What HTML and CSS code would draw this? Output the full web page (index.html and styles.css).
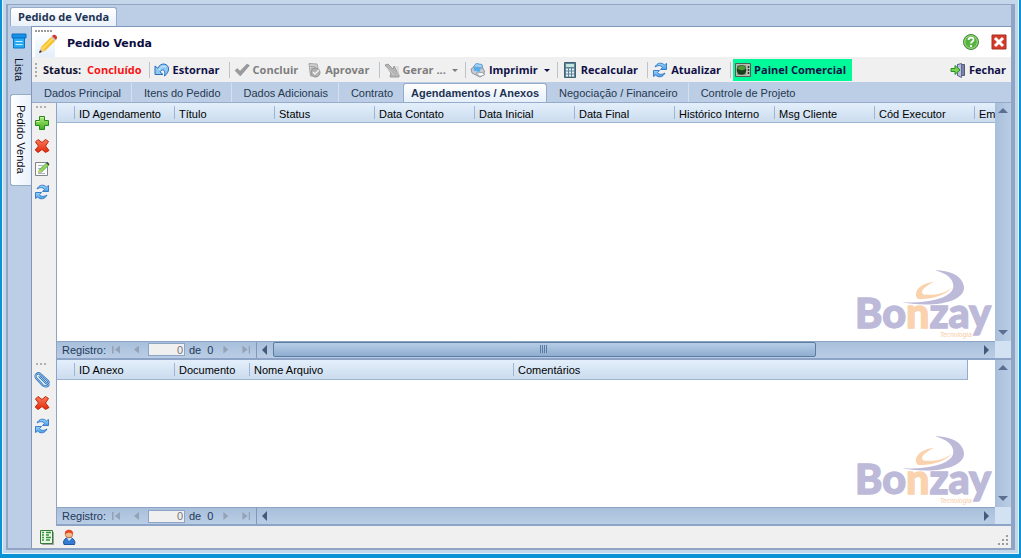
FILE: index.html
```html
<!DOCTYPE html>
<html lang="pt-BR">
<head>
<meta charset="utf-8">
<title>Pedido de Venda</title>
<link rel="stylesheet" href="styles.css">
</head>
<body>
<svg class="defs" aria-hidden="true">
  <defs>
    <linearGradient id="gGreen" x1="0" y1="0" x2="0" y2="1"><stop offset="0" stop-color="#b4ec7c"/><stop offset="1" stop-color="#3fae1c"/></linearGradient>
    <linearGradient id="gRed" x1="0" y1="0" x2="0" y2="1"><stop offset="0" stop-color="#fb7a5c"/><stop offset="1" stop-color="#e02a08"/></linearGradient>
    <linearGradient id="gBlue" x1="0" y1="0" x2="0" y2="1"><stop offset="0" stop-color="#9ad8fb"/><stop offset="1" stop-color="#4a9be6"/></linearGradient>
    <symbol id="plus" viewBox="0 0 16 16"><path d="M5.500 1.500h5v4h4v5h-4v4h-5v-4h-4v-5h4z" fill="url(#gGreen)" stroke="#258a1c"/><path d="M6.500 2.500h3M2.500 6.500h3" stroke="#d9f8bd"/></symbol>
    <symbol id="delete" viewBox="0 0 16 16"><path d="M4 1.500 8 4.500l3.500-3 3 2-3 4.500 3.500 4.500-3.500 2L8 11.500l-4 3-2.800-2.500L4.500 8 1.500 4z" fill="url(#gRed)" stroke="#c2260c" stroke-linejoin="round"/></symbol>
    <symbol id="edit" viewBox="0 0 16 16"><path d="M1.500 1.500h12v13h-12z" fill="#fafafa" stroke="#81868d"/><path d="M4 4.500h5M4 7.500h4M4 12.500h7" stroke="#aab4c2"/><path d="m4.500 11.500 1-3 7-6.500 2.500 2-7.500 7z" fill="#8cd65c" stroke="#4aa040" stroke-width=".7"/><path d="m4 12 1.500-3 2 2z" fill="#e7c27c"/><path d="m12 2 1.500-1 2 2-1 1.500z" fill="#43484e"/></symbol>
    <symbol id="refresh" viewBox="0 0 16 16"><g fill="url(#gBlue)" stroke="#2f74c4" stroke-width=".9" stroke-linejoin="round"><path d="M3 5C5 .5 10 .2 12.300 3L14.500 1.500V7.500H8.500L10.500 5.300C9 3.300 6 3 3 5z"/><path d="M13 11c-2 4.500-7 4.800-9.300 2L1.500 14.500v-6h6l-2 2.200c1.500 2 4.500 2.300 7.500.3z"/></g></symbol>
    <symbol id="undo" viewBox="0 0 16 16"><path d="M1 4v8.500h8L6 9.800C8.500 6.500 12 7.500 10.500 14c5-3.500 6-11-.5-12C7.500 1.800 5 3.500 3.800 6.200z" fill="#90c8f4" stroke="#2a6fbd" stroke-linejoin="round"/><path d="M5 8c1.500-3 4.500-4.500 7-3" fill="none" stroke="#d9f0ff"/></symbol>
    <symbol id="check" viewBox="0 0 16 16"><path d="m1 8.500 2.500-2L6 9.300 13 2l2.500 1.500L6.300 14z" fill="#9a9a9a" stroke="#8a8a8a" stroke-width=".5"/></symbol>
    <symbol id="approve" viewBox="0 0 16 16"><path d="m3 1.500 8 .5 1 4-2 8H4.500z" fill="#d0d0d0" stroke="#a5a5a5"/><path d="m4.500 4.500 5 .5m-4.500 2h4" stroke="#999"/><circle cx="9.500" cy="10.500" r="4.500" fill="#b0b0b0" stroke="#929292"/><path d="m7 10 2 2 4-4" fill="none" stroke="#f1f1f1" stroke-width="1.500"/></symbol>
    <symbol id="generate" viewBox="0 0 16 16"><path d="m1 3 3-1 5 5 1-3 5 9v2H6l1-4z" fill="#b5b5b5" stroke="#9b9b9b"/><path d="m2 5 8 8M11 5h3v8" stroke="#ccc" fill="none"/></symbol>
    <symbol id="printer" viewBox="0 0 16 16"><path d="m3 5.500 3-4 6 1 1 5z" fill="#9ad1fa" stroke="#639fd3"/><path d="m1 7 3-2 8.500 1 2 3-1 4L10 15l-8-4z" fill="#c9cdd3" stroke="#8e949f"/><path d="m4 5 7 1-1.500 4-6-1.500z" fill="#55aef0"/><path d="m6 11 6-.5 3 2-5 2z" fill="#fff" stroke="#7d8794" stroke-width=".7"/></symbol>
    <symbol id="calc" viewBox="0 0 16 16"><path d="M2.500.5h11v15h-11z" fill="#5c8399" stroke="#41616f"/><path d="M4 2h8v3H4z" fill="#c4e6dc"/><path d="M4 7.500h8M4 10.500h8M4 13.500h8" stroke="#e8f2f5" stroke-width="2" stroke-dasharray="2 1"/></symbol>
    <symbol id="panel" viewBox="0 0 16 16"><path d="M.5 1.500h15v13H.5z" fill="#b9beb2" stroke="#555c55"/><path d="M2 3h9v10H2z" fill="#8a9486"/><circle cx="6.500" cy="8" r="4.800" fill="#173f1b"/><path d="M2.500 7c1-4 7-5 8.300 0L7 8.500z" fill="#4e9a3a"/><path d="M13.500 4v2m0 1v2m0 1v2" stroke="#333" stroke-width="1.500"/></symbol>
    <symbol id="exit" viewBox="0 0 16 16"><path d="M7.500 2.500h7v11h-7z" fill="#7b82aa" stroke="#51587d"/><path d="m7.500 2.500 4-1v14l-4-2z" fill="#b8bedb" stroke="#626990"/><path d="M1 6.500h4v-3L10 8l-5 4.500v-3H1z" fill="#7cd34f" stroke="#2b8d2b"/></symbol>
    <symbol id="clip" viewBox="0 0 16 16"><path d="m5 4 7 7c1.500 1.500 3.500-.5 2-2L7 2.500C4-.5-.5 3 2.500 6.500l6 6.500c2 2 6 2 6-1" fill="none" stroke="#3476b9" stroke-width="2.200"/><path d="m5 4 7 7c1.500 1.500 3.500-.5 2-2L7 2.500C4-.5-.5 3 2.500 6.500l6 6.500c2 2 6 2 6-1" fill="none" stroke="#a2d2f7" stroke-width=".8"/></symbol>
    <symbol id="logo" viewBox="54 30 414 216">
      <path d="M288 34c62 0 87 29 87 52 0 42-90 62-185 44 74 3 153-12 153-49 0-22-21-38-55-47z" fill="#bdb9d9"/>
      <path d="M286 68c-50 5-65 36-49 52 43 0 78-9 103-34-25 17-51 23-79 21-19-1-18-18 25-39z" fill="#fad3ae"/>
      <text x="48" y="206" class="brand">Bo<tspan class="brand-accent">n</tspan>zay</text>
      <text x="302" y="235" class="brand-sub">Tecnologia</text>
    </symbol>
  </defs>
</svg>

<div class="window">
  <div class="frame">
    <nav class="doc-tabs"><button class="doc-tab">Pedido de Venda</button></nav>
    <div class="workspace">
      <nav class="side-tabs">
        <button class="side-tab">
          <svg class="icon" viewBox="0 0 16 16"><path d="M1 1h14v4H1z" fill="#1791e8" stroke="#0872c2"/><path d="M2.500 5h11v10h-11z" fill="#29a9f4" stroke="#0876c8"/><path d="M4.500 8.500h7m-7 3h7" stroke="#caf0ff"/></svg>
          <span>Lista</span>
        </button>
        <button class="side-tab side-tab-active"><span>Pedido Venda</span></button>
      </nav>
      <main class="content">
        <header class="title-bar">
          <div class="title-icon"><span class="grip-row"></span>
            <svg viewBox="0 0 20 20"><path d="m1 19 2-6 4 4z" fill="#eac98d"/><path d="m1 19 1-3 2 2z" fill="#333"/><path d="M3 13 13 3l4 4L7 17z" fill="#f9bd25"/><path d="M4 14 14 4l1.500 1.500L5.500 15.500z" fill="#ffdc5d"/><path d="m13 3 1-1 4 4-1 1z" fill="#bdc2c9"/><path d="M14 2Q16 0 18 1.500T18 6z" fill="#d13b2d"/></svg>
          </div>
          <h1>Pedido Venda</h1>
          <button class="title-button" aria-label="Ajuda"><svg viewBox="0 0 16 16"><circle cx="8" cy="8" r="7.500" fill="#55b33e" stroke="#48853e"/><circle cx="8" cy="8" r="6.300" fill="none" stroke="#a8dc93"/><path d="M5.500 6c.3-3.500 5.500-3 5 0-.3 1.500-2.500 1.500-2.500 3.500M8 11v2" fill="none" stroke="#fff" stroke-width="1.800"/></svg></button>
          <button class="title-button" aria-label="Fechar aba"><svg viewBox="0 0 16 16"><path d="M1 1h14v14H1z" fill="#d33c2c" stroke="#ad2c20"/><path d="m4 4 8 8m0-8-8 8" stroke="#fff" stroke-width="3"/></svg></button>
        </header>

        <div class="toolbar" role="toolbar">
          <span class="grip-col"></span>
          <span class="status-label">Status:</span><span class="status-value">Concluído</span>
          <i class="sep"></i>
          <button class="tool"><svg class="icon"><use href="#undo"/></svg>Estornar</button>
          <i class="sep sep-wide"></i>
          <button class="tool" disabled><svg class="icon"><use href="#check"/></svg>Concluir</button>
          <button class="tool tool-next" disabled><svg class="icon"><use href="#approve"/></svg>Aprovar</button>
          <i class="sep sep-wide"></i>
          <button class="tool" disabled><svg class="icon"><use href="#generate"/></svg>Gerar ...<span class="caret"></span></button>
          <i class="sep"></i>
          <button class="tool"><svg class="icon"><use href="#printer"/></svg>Imprimir<span class="caret"></span></button>
          <i class="sep"></i>
          <button class="tool"><svg class="icon"><use href="#calc"/></svg>Recalcular</button>
          <i class="sep sep-wide"></i>
          <button class="tool"><svg class="icon"><use href="#refresh"/></svg>Atualizar</button>
          <i class="sep sep-wide"></i>
          <button class="tool tool-green"><svg class="icon"><use href="#panel"/></svg>Painel Comercial</button>
          <button class="tool tool-end"><svg class="icon"><use href="#exit"/></svg>Fechar</button>
        </div>

        <nav class="tabs">
          <button class="tab">Dados Principal</button><button class="tab">Itens do Pedido</button><button class="tab">Dados Adicionais</button><button class="tab tab-last">Contrato</button><button class="tab tab-active">Agendamentos / Anexos</button><button class="tab">Negociação / Financeiro</button><button class="tab tab-last">Controle de Projeto</button>
        </nav>

        <section class="pane pane-top">
          <div class="pane-tools">
            <span class="grip-row grip-short"></span>
            <button aria-label="Adicionar"><svg class="icon"><use href="#plus"/></svg></button>
            <button aria-label="Excluir"><svg class="icon"><use href="#delete"/></svg></button>
            <button aria-label="Editar"><svg class="icon"><use href="#edit"/></svg></button>
            <button aria-label="Atualizar agendamentos"><svg class="icon"><use href="#refresh"/></svg></button>
          </div>
          <div class="grid">
            <div class="grid-view">
              <table class="table-wide">
                <colgroup><col class="c-mark"><col class="c-id"><col class="c-id"><col class="c-id"><col class="c-id"><col class="c-id"><col class="c-id"><col class="c-id"><col class="c-id"><col class="c-id"><col></colgroup>
                <thead><tr><th></th><th>ID Agendamento</th><th>Título</th><th>Status</th><th>Data Contato</th><th>Data Inicial</th><th>Data Final</th><th>Histórico Interno</th><th>Msg Cliente</th><th>Cód Executor</th><th>Em</th></tr></thead>
              </table>
              <svg class="logo"><use href="#logo"/></svg>
            </div>
            <div class="vscroll"><i class="arrow up"></i><i class="arrow down"></i></div>
            <div class="grid-foot">
              <div class="record"><label for="rec1">Registro:</label><button class="first" aria-label="Primeiro"></button><button class="prev" aria-label="Anterior"></button><input id="rec1" value="0"><span>de</span><span>0</span><button class="next" aria-label="Próximo"></button><button class="last" aria-label="Último"></button></div>
              <div class="hscroll"><i class="arrow left"></i><div class="track"><div class="thumb"></div></div><i class="arrow right"></i></div>
            </div>
            <div class="corner"></div>
          </div>
        </section>

        <section class="pane pane-bottom">
          <div class="pane-tools">
            <span class="grip-row grip-short"></span>
            <button aria-label="Anexar"><svg class="icon"><use href="#clip"/></svg></button>
            <button aria-label="Excluir anexo"><svg class="icon"><use href="#delete"/></svg></button>
            <button aria-label="Atualizar anexos"><svg class="icon"><use href="#refresh"/></svg></button>
          </div>
          <div class="grid">
            <div class="grid-view">
              <table class="table-files">
                <colgroup><col class="c-mark"><col class="c-id"><col class="c-doc"><col class="c-name"><col></colgroup>
                <thead><tr><th></th><th>ID Anexo</th><th>Documento</th><th>Nome Arquivo</th><th>Comentários</th></tr></thead>
              </table>
              <svg class="logo"><use href="#logo"/></svg>
            </div>
            <div class="vscroll"><i class="arrow up"></i><i class="arrow down"></i></div>
            <div class="grid-foot">
              <div class="record"><label for="rec2">Registro:</label><button class="first" aria-label="Primeiro"></button><button class="prev" aria-label="Anterior"></button><input id="rec2" value="0"><span>de</span><span>0</span><button class="next" aria-label="Próximo"></button><button class="last" aria-label="Último"></button></div>
              <div class="hscroll"><i class="arrow left"></i><div class="track"></div><i class="arrow right"></i></div>
            </div>
            <div class="corner"></div>
          </div>
        </section>

        <footer class="status-bar">
          <button aria-label="Relatório"><svg class="icon" viewBox="0 0 16 16"><path d="M3 3h12v13H3z" fill="#9ba79b"/><path d="M1.500 1.500h12v13h-12z" fill="#e8f7e7" stroke="#377b3a"/><path d="M3 3.500h2m2 0h5M3 6h2m2 0h3M3 8.500h2m2 0h5M3 11h2m2 0h4" stroke="#359239" stroke-width="1.300"/></svg></button>
          <button aria-label="Usuário"><svg class="icon" viewBox="0 0 16 16"><path d="M3 15.500C1.500 12 4 8.500 8 8.500s7 3.500 5.500 7z" fill="#347bd2" stroke="#24569b"/><path d="m6 9 2 3 3-3z" fill="#d8e7fa"/><circle cx="8" cy="5" r="3.800" fill="#f2bb89" stroke="#ae5b35" stroke-width=".7"/><path d="M4 5C3-.5 12.500-1 12 5L8 3.500z" fill="#e84522"/></svg></button>
          <svg class="resize" viewBox="0 0 11 11"><path d="M8 0h2v2H8zM4 4h2v2H4zM8 4h2v2H8zM0 8h2v2H0zM4 8h2v2H4zM8 8h2v2H8z" fill="#9c9c9c"/></svg>
        </footer>
      </main>
    </div>
  </div>
</div>
</body>
</html>
```
FILE: styles.css
```css
* { box-sizing: border-box; }
body {
  margin: 0;
  height: 100vh;
  padding: 0 2px 4px;
  background: #0a92d6;
  color: #10101c;
  font: 11px/14px "Liberation Sans", Arial, sans-serif;
}
button { border: 0; padding: 0; margin: 0; background: none; color: inherit; font: inherit; }
.defs { position: absolute; width: 0; height: 0; }
.icon { display: block; flex: none; width: 16px; height: 16px; }

.window {
  height: 100%;
  padding: 4px 3px 3px;
  background: #c3d6ea;
  border: 1px solid #e6f4fc;
  border-top: 0;
}
.frame {
  display: flex;
  flex-direction: column;
  height: 100%;
  border: 2px solid #8fa5c3;
  border-right-width: 4px;
  border-top-width: 1px;
  background: #bbcee6;
}
.doc-tabs { display: flex; height: 21px; padding: 2px 0 0 2px; flex: none; }
.doc-tab {
  padding: 0 7px;
  border: 1px solid #96abc9;
  border-bottom: 0;
  border-radius: 3px 3px 0 0;
  background: linear-gradient(#fff, #e9f1fa);
  color: #1d3353;
  font: bold 11px/18px "Open Sans", sans-serif;
}
.workspace { display: flex; flex: 1; min-height: 0; }
.side-tabs { display: flex; flex-direction: column; flex: none; width: 23px; padding-left: 2px; }
.side-tab {
  display: flex;
  flex-direction: column;
  align-items: center;
  gap: 9px;
  height: 68px;
  padding-top: 7px;
  padding-right: 3px;
}
.side-tab span { writing-mode: vertical-rl; }
.side-tab-active {
  height: 92px;
  padding-top: 10px;
  padding-right: 0;
  border: 1px solid #96abc9;
  border-right: 0;
  border-radius: 3px 0 0 3px;
  background: linear-gradient(90deg, #fff, #e9f1fa);
}
.content {
  display: flex;
  flex-direction: column;
  flex: 1;
  min-width: 0;
  border-left: 1px solid #8298bb;
  border-top: 1px solid #8298bb;
  background: #f0f0f0;
}

.title-bar { display: flex; align-items: center; gap: 12px; height: 30px; flex: none; padding: 0 4px 0 3px; background: #fff; }
.title-icon { display: flex; flex-direction: column; align-items: flex-start; gap: 2px; padding-top: 3px; height: 30px; width: 20px; background: linear-gradient(#fff 20%, #e3effb); }
.title-icon svg { width: 20px; height: 20px; margin-left: 3px; }
.grip-row { width: 18px; height: 2px; flex: none; background: repeating-linear-gradient(90deg, #9c9c9c 0 2px, transparent 2px 3px); }
.grip-short { width: 11px; background: repeating-linear-gradient(90deg, #b0b0b0 0 2px, transparent 2px 4px); }
h1 { flex: 1; margin: 0; padding-top: 3px; color: #0d0d40; font: bold 11px/16px "DejaVu Sans", Verdana, sans-serif; }
.title-button svg { display: block; width: 16px; height: 16px; }

.toolbar {
  display: flex;
  align-items: center;
  height: 25px;
  flex: none;
  padding: 0 5px 0 3px;
  color: #101048;
  font: bold 11px/16px "Open Sans", sans-serif;
  white-space: nowrap;
}
.grip-col { width: 2px; height: 14px; margin-right: 6px; background: repeating-linear-gradient(#aaa 0 2px, transparent 2px 4px); }
.status-label { margin-right: 6px; color: #111130; }
.status-value { color: #fb1212; }
.sep { width: 1px; height: 16px; margin: 0 4px 0 7px; background: #bfc3c9; }
.sep-wide { margin-left: 9px; }
.tool { display: flex; align-items: center; gap: 3px; height: 22px; }
.tool:disabled { color: #7d7d7d; }
.tool-next { margin-left: 8px; }
.tool-green { padding: 0 6px 0 2px; margin-left: -2px; background: #00fa9a; }
.tool-end { margin-left: auto; }
.caret { margin: 2px 0 0 3px; border: 3px solid transparent; border-top-color: currentColor; border-bottom: 0; }

.tabs { display: flex; height: 21px; flex: none; padding-top: 1px; background: #bbcee6; border-bottom: 1px solid #96abc9; }
.tab { padding: 0 10px 0 12px; border-right: 1px solid #d5e1f1; color: #26384f; white-space: nowrap; }
.tab-last { border-right: 0; }
.tab-active {
  padding: 0 7px;
  border: 1px solid #96abc9;
  border-bottom: 0;
  border-radius: 3px 3px 0 0;
  background: linear-gradient(#fff, #e6effa);
  color: #1d3353;
  font-weight: bold;
}

.pane { display: flex; min-height: 0; }
.pane-top { flex: 256 1 0; }
.pane-bottom { flex: 166 1 0; }
.pane-tools { display: flex; flex-direction: column; gap: 7px; width: 24px; flex: none; padding: 3px 0 0 2px; }
.pane-tools .grip-row { margin-left: 2px; }
.grid {
  display: grid;
  grid-template: 1fr 17px / 1fr 16px;
  flex: 1;
  min-width: 0;
  border-left: 1px solid #8ea4c6;
  border-bottom: 2px solid #8ea4c6;
  background: #fff;
}
.grid-view { display: flex; flex-direction: column; justify-content: space-between; min-width: 0; overflow: hidden; }
table { border-collapse: separate; border-spacing: 0; table-layout: fixed; }
.table-wide { width: 100%; }
.table-files { width: calc(100% - 27px); border-right: 1px solid #96abc9; }
.c-mark { width: 18px; }
.c-id { width: 100px; }
.c-doc { width: 75px; }
.c-name { width: 264px; }
th {
  height: 20px;
  padding: 2px 4px 0;
  border-bottom: 1px solid #9fb4d0;
  background: linear-gradient(90deg, transparent calc(100% - 1px), #9fb4d0 0) 0 3px / 100% 13px no-repeat, linear-gradient(#e3effb, #cbdcee);
  color: #000;
  font-weight: normal;
  text-align: left;
  white-space: nowrap;
}
th:last-child { padding-right: 0; background: linear-gradient(#e3effb, #cbdcee); }
.logo { align-self: flex-end; width: 138px; height: 72px; flex: none; }
.brand { fill: #bdb9d9; stroke: #bdb9d9; stroke-width: 4px; font: 900 124px Lato, sans-serif; }
.brand-accent { fill: #fad3ae; stroke: #fad3ae; }
.brand-sub { fill: #f7cba3; font: italic 20px "Liberation Sans", sans-serif; }

.vscroll { display: flex; flex-direction: column; justify-content: space-between; align-items: center; padding: 5px 0 6px; background: linear-gradient(90deg, #a8bfdb, #bacde5); }
.arrow { width: 0; height: 0; border: 5px solid transparent; flex: none; }
.up { border-top: 0; border-bottom-color: #5c6f92; }
.down { border-bottom: 0; border-top-color: #5c6f92; }
.left { border-left: 0; border-right-color: #44587c; }
.right { border-right: 0; border-left-color: #44587c; }
.grid-foot { display: flex; min-width: 0; border-top: 1px solid #8ea4c6; background: linear-gradient(#a8bfdb, #bacde5); }
.corner { background: #d3e2f3; }
.record { display: flex; align-items: center; width: 200px; padding-left: 5px; color: #22395a; border-right: 1px solid #7f98bc; }
.record label { width: 50px; }
.record input { width: 37px; height: 13px; padding: 0 1px; margin: 0 4px 0 6px; border: 1px solid #8ea4c6; background: #f0f0f0; color: #777; font: inherit; text-align: right; }
.record span { margin-right: 6px; }
.record button { width: 8px; height: 8px; flex: none; background: #93a3b5; }
.record .prev { width: 5px; margin-left: 14px; margin-right: 3px; clip-path: polygon(100% 0, 100% 100%, 0 50%); }
.record .next { width: 5px; margin-left: 4px; clip-path: polygon(0 0, 0 100%, 100% 50%); }
.record .first { clip-path: polygon(0 0, 20% 0, 20% 100%, 35% 50%, 100% 0, 100% 100%, 35% 50%, 20% 100%, 0 100%); }
.record .last { margin-left: 14px; clip-path: polygon(100% 0, 80% 0, 80% 100%, 65% 50%, 0 0, 0 100%, 65% 50%, 80% 100%, 100% 100%); }
.hscroll { display: flex; align-items: center; flex: 1; min-width: 0; padding: 0 6px 0 5px; gap: 6px; }
.track { flex: 1; height: 100%; }
.thumb {
  width: 77%;
  height: 15px;
  border: 1px solid #5c7ba3;
  border-radius: 2px;
  background: repeating-linear-gradient(90deg, #5c7ba3 0 1px, transparent 1px 2px) center / 8px 8px no-repeat, linear-gradient(#b7cde6, #8eadd0);
}

.status-bar { display: flex; align-items: center; gap: 6px; height: 22px; flex: none; padding: 0 2px 0 7px; }
.resize { width: 11px; height: 11px; margin: 6px 0 0 auto; }
```
